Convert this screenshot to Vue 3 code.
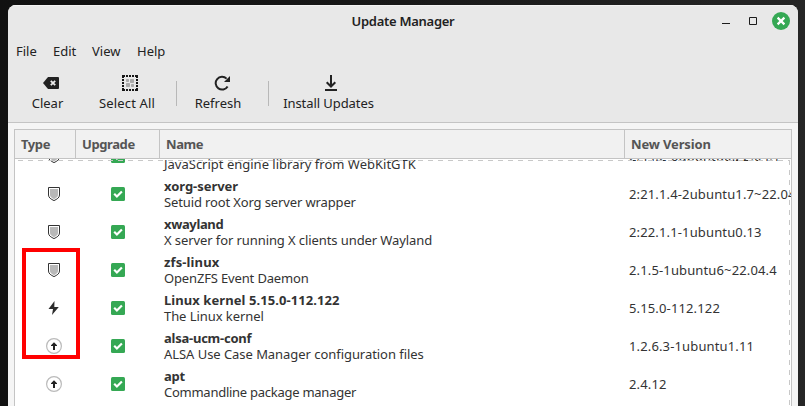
<script setup>
const menus = [
  { label: 'File', w: 37 },
  { label: 'Edit', w: 39 },
  { label: 'View', w: 45 },
  { label: 'Help', w: 40 },
]
const rows = [
  { type: 'shield', name: '', nameTrack: 0, desc: 'JavaScript engine library from WebKitGTK', descTrack: 0, version: '2.44.2-0ubuntu0.22.04.1' },
  { type: 'shield', name: 'xorg-server', nameTrack: -0.04, desc: 'Setuid root Xorg server wrapper', descTrack: -0.13, version: '2:21.1.4-2ubuntu1.7~22.04.11' },
  { type: 'shield', name: 'xwayland', nameTrack: -0.36, desc: 'X server for running X clients under Wayland', descTrack: -0.09, version: '2:22.1.1-1ubuntu0.13' },
  { type: 'shield', name: 'zfs-linux', nameTrack: 0.12, desc: 'OpenZFS Event Daemon', descTrack: -0.15, version: '2.1.5-1ubuntu6~22.04.4' },
  { type: 'kernel', name: 'Linux kernel 5.15.0-112.122', nameTrack: 0.07, desc: 'The Linux kernel', descTrack: -0.07, version: '5.15.0-112.122' },
  { type: 'package', name: 'alsa-ucm-conf', nameTrack: -0.24, desc: 'ALSA Use Case Manager configuration files', descTrack: -0.05, version: '1.2.6.3-1ubuntu1.11' },
  { type: 'package', name: 'apt', nameTrack: -0.3, desc: 'Commandline package manager', descTrack: -0.26, version: '2.4.12' },
]
const track = (v) => ({ letterSpacing: v + 'px' })
</script>

<template>
  <div class="desktop">
    <div class="window">
      <header class="chrome">
        <div class="titlebar">
          <h1 class="title">Update Manager</h1>
          <div class="controls">
            <svg width="8" height="16" viewBox="0 0 8 16"><path d="M0 10.5h8" stroke="#1c1c1c" /></svg>
            <svg width="8" height="16" viewBox="0 0 8 16"><path d="M.5 4.500h7v7h-7z" fill="none" stroke="#1c1c1c" /></svg>
            <svg width="18" height="18" viewBox="0 0 18 18"><circle cx="9" cy="9" r="9" fill="#35a854" /><path d="M5.600 5.600l6.800 6.800M12.400 5.600l-6.800 6.800" stroke="#fff" stroke-width="2.200" /></svg>
          </div>
        </div>
        <nav class="menubar">
          <span v-for="m in menus" :key="m.label" :style="{ width: m.w + 'px' }">{{ m.label }}</span>
        </nav>
        <div class="toolbar">
          <button class="tool clear">
            <svg width="16" height="16" viewBox="0 0 16 16"><path d="M5 2h10q1 0 1 1v10q0 1-1 1H5L0 8z" fill="#222" /><path d="M7.800 5.800l4.400 4.400M12.200 5.800l-4.400 4.400" stroke="#eee" stroke-width="1.800" /></svg>
            <span>Clear</span>
          </button>
          <button class="tool select">
            <svg width="16" height="16" viewBox="0 0 16 16">
              <path d="M0 0h3v2H2v1H0zM4 0h2v2H4zM7 0h2v2H7zM10 0h2v2h-2zM13 0h3v3h-2V2h-1zM0 4h2v2H0zM0 7h2v2H0zM0 10h2v2H0zM14 4h2v2h-2zM14 7h2v2h-2zM14 10h2v2h-2zM0 13h2v1h1v2H0zM4 14h2v2H4zM7 14h2v2H7zM10 14h2v2h-2zM14 13h2v3h-3v-2h1z" fill="#161616" />
              <g fill="#aaa"><rect x="4" y="4" width="3" height="3" rx=".7" /><rect x="8" y="4" width="4" height="4" rx=".8" /><rect x="4" y="8" width="4" height="4" rx=".8" /><rect x="9" y="9" width="3" height="3" rx=".7" /></g>
            </svg>
            <span>Select All</span>
          </button>
          <i class="divider"></i>
          <button class="tool refresh">
            <svg width="16" height="16" viewBox="0 0 16 16"><path d="M13.600 11.400A6.400 6.400 0 1 1 12.600 3.600" fill="none" stroke="#222" stroke-width="2" /><path d="M16 1v6h-6z" fill="#222" /></svg>
            <span>Refresh</span>
          </button>
          <i class="divider"></i>
          <button class="tool install">
            <svg width="16" height="16" viewBox="0 0 16 16"><path d="M8 0v11M3.700 7.200L8 11.500l4.300-4.300M2 15h12" fill="none" stroke="#222" stroke-width="2" /></svg>
            <span>Install Updates</span>
          </button>
        </div>
      </header>

      <main class="table">
        <div class="row head">
          <b>Type</b><b>Upgrade</b><b>Name</b><b>New Version</b>
        </div>
        <div class="body">
          <div v-for="r in rows" :key="r.desc" class="row item">
            <div class="icon">
              <svg v-if="r.type === 'shield'" width="16" height="16" viewBox="0 0 16 16"><path d="M2.500 1.500h11V9c0 2.700-2.500 4.200-5.500 5.600C5 13.200 2.500 11.700 2.500 9z" fill="#fff" stroke="#333" /><path d="M4 3h8v6c0 1.900-1.700 3-4 4.200C5.700 12 4 10.900 4 9z" fill="#b8b8b8" /></svg>
              <svg v-else-if="r.type === 'kernel'" width="16" height="16" viewBox="0 0 16 16"><path d="M8.500 1L2.500 9H7l-1 6 6.800-8H8.300z" fill="#2b2b2b" /></svg>
              <svg v-else width="16" height="16" viewBox="0 0 16 16"><circle cx="8" cy="8" r="7.400" fill="#fff" stroke="#bababa" stroke-width="1.200" /><path d="M8 4.300l3 2.900V8H9v4H7V8H5v-.8z" fill="#222" /></svg>
            </div>
            <div class="check">
              <svg width="14" height="14" viewBox="0 0 14 14"><rect width="14" height="14" rx="1.500" fill="#35a854" /><path d="M3.200 6.800l2.700 2.700 5-5" fill="none" stroke="#fff" stroke-width="2.200" /></svg>
            </div>
            <div class="name"><b :style="track(r.nameTrack)">{{ r.name }}</b><span :style="track(r.descTrack)">{{ r.desc }}</span></div>
            <div class="version">{{ r.version }}</div>
          </div>
          <i class="dash-top"></i>
          <i class="dash-right"></i>
        </div>
      </main>
    </div>
    <div class="highlight"></div>
  </div>
</template>

<style>
body { margin: 0; overflow: hidden; }
</style>

<style scoped>
* { box-sizing: border-box; }
.desktop { position: relative; width: 805px; height: 406px; padding: 5px 7px 0 8px; overflow: hidden; background: linear-gradient(90deg, #111 0, #181818 50%, #262626 100%); font: 13px/16px "Noto Sans", sans-serif; color: #222; }
.window { height: 401px; border-radius: 8px 8px 0 0; background: #f5f5f5; overflow: hidden; display: flex; flex-direction: column; }
.chrome { height: 118px; flex: none; background: #e8e8e8; border-bottom: 1px solid #c4c4c4; box-shadow: inset 0 1px #f3f3f3; }
.titlebar { height: 32px; display: grid; grid-template-columns: 1fr auto 1fr; align-items: center; }
.title { grid-column: 2; margin: 0; font-size: 13px; font-weight: 600; line-height: 16px; letter-spacing: -.28px; }
.controls { display: flex; align-items: center; justify-content: flex-end; gap: 19px; padding-right: 8px; }
.controls svg:nth-child(3) { margin-left: -4px; }
.menubar { display: flex; height: 28px; align-items: center; padding-left: 8px; }
.toolbar { display: flex; height: 56px; padding-top: 10px; }
.tool { border: 0; padding: 0; background: none; font: inherit; color: inherit; display: flex; flex-direction: column; align-items: center; gap: 4px; white-space: nowrap; flex: none; }
.tool svg { margin-left: 7px; }
.clear { width: 79px; }
.select { width: 80px; letter-spacing: .15px; }
.select svg { margin-left: 6px; }
.refresh { width: 82px; }
.install { width: 119px; letter-spacing: -.07px; }
.install svg { margin-left: 5px; }
.divider { width: 1px; height: 25px; margin: 6px 0 0 9px; background: #b8b8b8; flex: none; }
.table { margin: 6px 6px 0; width: 778px; height: 277px; border: 1px solid #c4c4c4; border-bottom: 0; background: #fff; overflow: hidden; display: flex; flex-direction: column; }
.row { display: grid; grid-template-columns: 61px 84px 465px 1fr; }
.head { height: 29px; flex: none; background: #f1f1f1; border-bottom: 1px solid #c4c4c4; color: #555; }
.head b { padding-left: 6px; line-height: 28px; border-right: 1px solid #c4c4c4; font-weight: 700; letter-spacing: -.4px; }
.head b:last-child { border: 0; letter-spacing: -.15px; }
.body { position: relative; flex: 1; overflow: hidden; display: flex; flex-direction: column; justify-content: flex-start; }
.item { height: 38px; flex: none; color: #333; }
.item:first-child { margin-top: -22px; }
.icon, .check { display: flex; align-items: center; justify-content: center; }
.icon { padding-left: 17px; }
.name { padding-left: 4px; padding-top: 3px; }
.name b, .name span { display: block; height: 16px; line-height: 16px; white-space: nowrap; }
.version { padding-left: 4px; line-height: 38px; white-space: nowrap; letter-spacing: .14px; }
.dash-top { position: absolute; left: 3px; right: 2px; top: 1px; height: 1px; background: repeating-linear-gradient(90deg, #c8c8c8 0 5px, transparent 5px 10px); }
.dash-right { position: absolute; right: 1px; top: 1px; bottom: 0; width: 1px; background: repeating-linear-gradient(180deg, #c8c8c8 0 5px, transparent 5px 10px); }
.highlight { position: absolute; left: 22px; top: 248px; width: 58px; height: 111px; border: 4px solid #f00; }
</style>
